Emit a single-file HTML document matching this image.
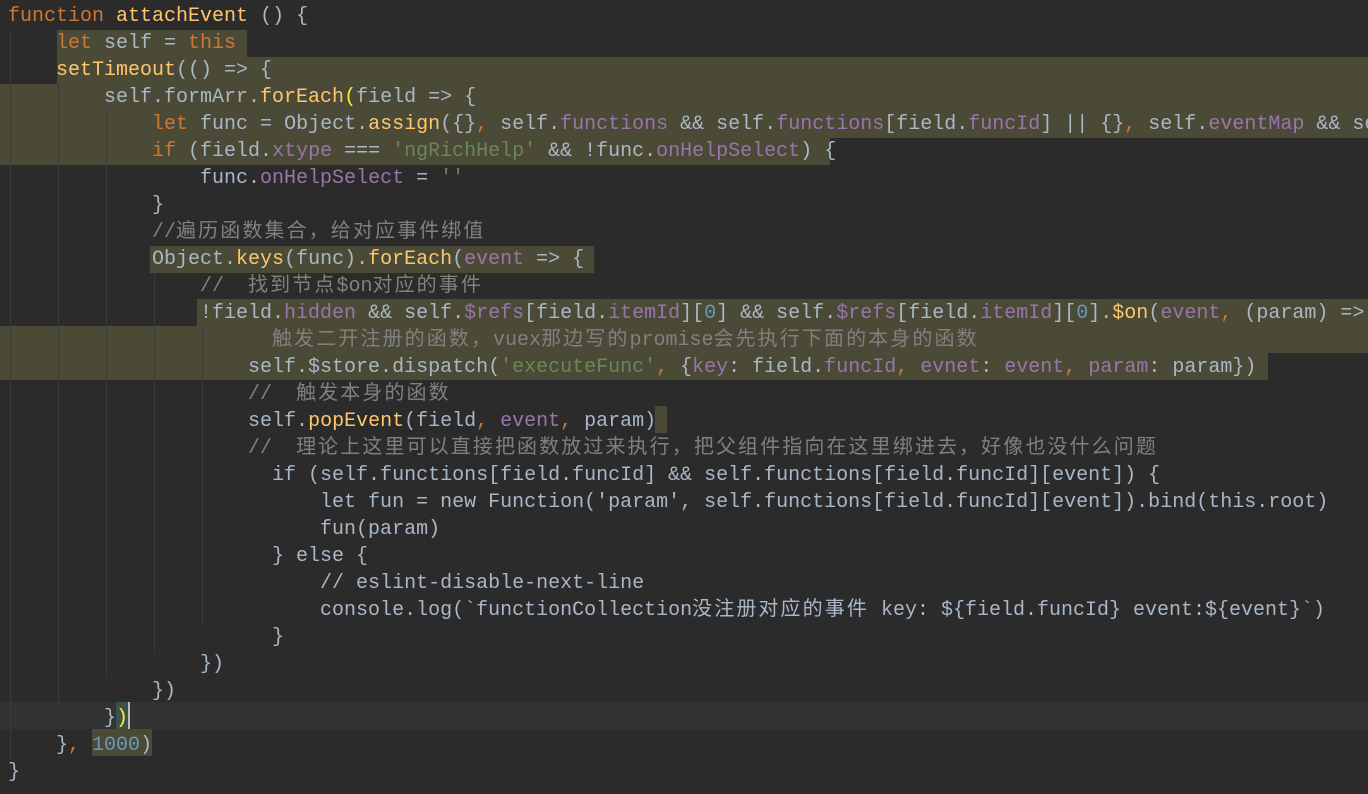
<!DOCTYPE html>
<html><head><meta charset="utf-8"><style>
html,body{margin:0;padding:0;background:#2b2b2b;width:1368px;height:794px;overflow:hidden;position:relative}
.h{position:absolute;background:#4b4a36}
.g{position:absolute;width:1px;background:#3a3a3a}
pre{position:absolute;left:8px;top:3px;margin:0;font-family:"Liberation Mono","Noto Sans CJK SC",monospace;font-size:20px;line-height:27px;color:#a9b7c6;white-space:pre}
.k{color:#cc7832}.f{color:#ffc66d}.p{color:#9876aa}.s{color:#6a8759}.c{color:#808080}.n{color:#6897bb}.y{color:#ffef28}
.z{letter-spacing:2.1px}
</style></head><body>
<div class="h" style="left:57px;top:30px;width:190px;height:27px"></div>
<div class="h" style="left:57px;top:57px;width:1311px;height:27px"></div>
<div class="h" style="left:0;top:84px;width:1368px;height:54px"></div>
<div class="h" style="left:0;top:138px;width:830px;height:27px"></div>
<div class="h" style="left:150px;top:246px;width:444px;height:27px"></div>
<div class="h" style="left:197px;top:299px;width:1171px;height:27px"></div>
<div class="h" style="left:0;top:326px;width:1368px;height:27px"></div>
<div class="h" style="left:0;top:353px;width:1268px;height:27px"></div>
<div class="h" style="left:655px;top:406px;width:12px;height:27px"></div>
<div style="position:absolute;left:0;top:702px;width:1368px;height:27px;background:#323232"></div>
<div class="h" style="left:92px;top:729px;width:60px;height:27px"></div>
<div style="position:absolute;left:116px;top:702px;width:12px;height:27px;background:#3b514d"></div>
<div style="position:absolute;left:128px;top:702px;width:2px;height:27px;background:#bbb"></div>
<div class="g" style="left:10px;top:30px;height:730px"></div>
<div class="g" style="left:58px;top:84px;height:620px"></div>
<div class="g" style="left:106px;top:110px;height:566px"></div>
<div class="g" style="left:154px;top:272px;height:380px"></div>
<div class="g" style="left:202px;top:326px;height:300px"></div>
<pre><span class="k">function</span> <span class="f">attachEvent</span> () {
    <span class="k">let</span> self = <span class="k">this</span>
    <span class="f">setTimeout</span>(() => {
        self.formArr.<span class="f">forEach</span><span class="y">(</span>field => {
            <span class="k">let</span> func = Object.<span class="f">assign</span>({}<span class="k">,</span> self.<span class="p">functions</span> &amp;&amp; self.<span class="p">functions</span>[field.<span class="p">funcId</span>] || {}<span class="k">,</span> self.<span class="p">eventMap</span> &amp;&amp; self
            <span class="k">if</span> (field.<span class="p">xtype</span> === <span class="s">'ngRichHelp'</span> &amp;&amp; !func.<span class="p">onHelpSelect</span>) {
                func.<span class="p">onHelpSelect</span> = <span class="s">''</span>
            }
            <span class="c">//<span class="z">遍历函数集合，给对应事件绑值</span></span>
            Object.<span class="f">keys</span>(func).<span class="f">forEach</span>(<span class="p">event</span> => {
                <span class="c">//  <span class="z">找到节点</span>$on<span class="z">对应的事件</span></span>
                !field.<span class="p">hidden</span> &amp;&amp; self.<span class="p">$refs</span>[field.<span class="p">itemId</span>][<span class="n">0</span>] &amp;&amp; self.<span class="p">$refs</span>[field.<span class="p">itemId</span>][<span class="n">0</span>].<span class="f">$on</span>(<span class="p">event</span><span class="k">,</span> (param) =>
                      <span class="c"><span class="z">触发二开注册的函数，</span>vuex<span class="z">那边写的</span>promise<span class="z">会先执行下面的本身的函数</span></span>
                    self.$store.dispatch(<span class="s">'executeFunc'</span><span class="k">,</span> {<span class="p">key</span>: field.<span class="p">funcId</span><span class="k">,</span> <span class="p">evnet</span>: <span class="p">event</span><span class="k">,</span> <span class="p">param</span>: param})
                    <span class="c">//  <span class="z">触发本身的函数</span></span>
                    self.<span class="f">popEvent</span>(field<span class="k">,</span> <span class="p">event</span><span class="k">,</span> param)
                    <span class="c">//  <span class="z">理论上这里可以直接把函数放过来执行，把父组件指向在这里绑进去，好像也没什么问题</span></span>
                      if (self.functions[field.funcId] &amp;&amp; self.functions[field.funcId][event]) {
                          let fun = new Function('param', self.functions[field.funcId][event]).bind(this.root)
                          fun(param)
                      } else {
                          // eslint-disable-next-line
                          console.log(`functionCollection<span class="z">没注册对应的事件</span> key: ${field.funcId} event:${event}`)
                      }
                })
            })
        }<span class="y">)</span>
    }<span class="k">,</span> <span class="n">1000</span>)
}</pre>
</body></html>
